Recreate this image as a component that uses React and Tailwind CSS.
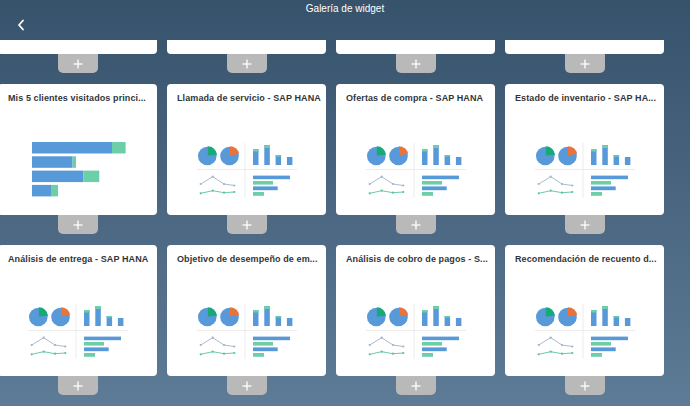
import React from "react";

const BLUE = "#5899da";
const LGREEN = "#6dcfa8";
const DGREEN = "#19a979";
const ORANGE = "#e8743b";

function slice(cx, cy, r, deg) {
  const t = (deg * Math.PI) / 180;
  const x = cx + r * Math.sin(t);
  const y = cy - r * Math.cos(t);
  return `M${cx} ${cy} L${cx} ${cy - r} A${r} ${r} 0 0 1 ${x.toFixed(2)} ${y.toFixed(2)} Z`;
}

function ChartThumb() {
  return (
    <svg width="100" height="55" viewBox="0 0 100 55">
      <line x1="48" y1="0" x2="48" y2="55" stroke="#ececec" strokeWidth="1" />
      <line x1="0" y1="26.5" x2="100" y2="26.5" stroke="#ececec" strokeWidth="1" />
      <circle cx="10.3" cy="13" r="9.3" fill={BLUE} />
      <path d={slice(10.8, 12.6, 9.3, 85)} fill={DGREEN} />
      <circle cx="32.5" cy="13" r="9.3" fill={BLUE} />
      <path d={slice(33, 12.6, 9.3, 78)} fill={ORANGE} />
      {/* vertical bars */}
      <rect x="56" y="6" width="5.5" height="16" fill={BLUE} />
      <rect x="56" y="6" width="5.5" height="2.5" fill={LGREEN} />
      <rect x="67.3" y="2" width="5.5" height="20" fill={BLUE} />
      <rect x="67.3" y="2" width="5.5" height="3" fill={LGREEN} />
      <rect x="78.6" y="12" width="5.5" height="10" fill={BLUE} />
      <rect x="78.6" y="12" width="5.5" height="1.5" fill={LGREEN} />
      <rect x="89.9" y="14" width="5.5" height="8" fill={BLUE} />
      {/* lines */}
      <polyline points="3.7,41 15.7,33.7 27,41 37.3,42.5" fill="none" stroke="#9fb3c8" strokeWidth="0.9" />
      <polyline points="3.7,50.3 15.7,47.7 27,49.7 37.3,49" fill="none" stroke="#5cc39a" strokeWidth="0.9" />
      {[[3.7, 41], [15.7, 33.7], [27, 41], [37.3, 42.5]].map(([x, y], i) => (
        <circle key={"a" + i} cx={x} cy={y} r="1.1" fill="#9fb3c8" />
      ))}
      {[[3.7, 50.3], [15.7, 47.7], [27, 49.7], [37.3, 49]].map(([x, y], i) => (
        <circle key={"b" + i} cx={x} cy={y} r="1.1" fill="#5cc39a" />
      ))}
      {/* horizontal bars */}
      <rect x="56" y="32.6" width="37" height="3.6" fill={BLUE} />
      <rect x="56" y="38" width="20" height="3.6" fill={LGREEN} />
      <rect x="56" y="43.4" width="24.7" height="3.8" fill={BLUE} />
      <rect x="56" y="49" width="11" height="3.8" fill={LGREEN} />
    </svg>
  );
}

function BarThumb() {
  const bars = [
    [80, 13.6],
    [40.6, 3.4],
    [51.3, 16],
    [19, 7],
  ];
  return (
    <svg width="94" height="56" viewBox="0 0 94 56">
      {bars.map(([b, g], i) => (
        <g key={i}>
          <rect x="0" y={i * 14.3} width={b} height="11.5" fill={BLUE} />
          <rect x={b} y={i * 14.3} width={g} height="11.5" fill={LGREEN} />
        </g>
      ))}
    </svg>
  );
}

function Tab() {
  return (
    <div className="w-[40px] h-[19px] bg-[#b9b9b9] rounded-b-[5px] flex items-center justify-center">
      <svg width="10" height="10" viewBox="0 0 10 10">
        <line x1="5" y1="0.5" x2="5" y2="9.5" stroke="#fff" strokeWidth="1.3" />
        <line x1="0.5" y1="5" x2="9.5" y2="5" stroke="#fff" strokeWidth="1.3" />
      </svg>
    </div>
  );
}

function Card({ title, kind }) {
  return (
    <div className="flex flex-col items-center">
      <div className="w-full h-[131px] bg-white rounded-[4px] flex flex-col">
        <div className="pl-[10px] pr-[8px] pt-[9px] text-[9px] leading-[11px] font-bold text-[#32363a] whitespace-nowrap overflow-hidden tracking-[0.1px]">
          {title}
        </div>
        {kind === "bars" ? (
          <div className="mt-[38px] pl-[34px]">
            <BarThumb />
          </div>
        ) : (
          <div className="mt-[39px] flex justify-center">
            <ChartThumb />
          </div>
        )}
      </div>
      <Tab />
    </div>
  );
}

function TopCard() {
  return (
    <div className="flex flex-col items-center">
      <div className="w-full h-[14px] bg-white rounded-b-[4px]" />
      <Tab />
    </div>
  );
}

export default function App() {
  const row2 = [
    ["Mis 5 clientes visitados princi...", "bars"],
    ["Llamada de servicio - SAP HANA", "chart"],
    ["Ofertas de compra - SAP HANA", "chart"],
    ["Estado de inventario - SAP HA...", "chart"],
  ];
  const row3 = [
    ["Análisis de entrega - SAP HANA", "chart"],
    ["Objetivo de desempeño de em...", "chart"],
    ["Análisis de cobro de pagos - S...", "chart"],
    ["Recomendación de recuento d...", "chart"],
  ];
  return (
    <div
      className="w-[690px] h-[406px] overflow-hidden bg-gradient-to-b from-[#37526b] to-[#5e7b97] flex flex-col"
      style={{ fontFamily: '"Liberation Sans", Arial, sans-serif' }}
    >
      <div className="h-[40px] flex flex-col">
        <div className="text-center text-white text-[10px] leading-[12px] pt-[3px]">Galería de widget</div>
        <div className="pl-[17px] pt-[4px]">
          <svg width="8" height="12" viewBox="0 0 8 12">
            <polyline points="6,1.5 2,6 6,10.5" fill="none" stroke="#fff" strokeWidth="1.8" strokeLinecap="round" strokeLinejoin="round" />
          </svg>
        </div>
      </div>
      <div className="grid grid-cols-[repeat(4,159px)] gap-x-[10px] gap-y-[11px] -ml-[2px]">
        <TopCard />
        <TopCard />
        <TopCard />
        <TopCard />
        {row2.map(([t, k]) => (
          <Card key={t} title={t} kind={k} />
        ))}
        {row3.map(([t, k]) => (
          <Card key={t} title={t} kind={k} />
        ))}
      </div>
    </div>
  );
}
